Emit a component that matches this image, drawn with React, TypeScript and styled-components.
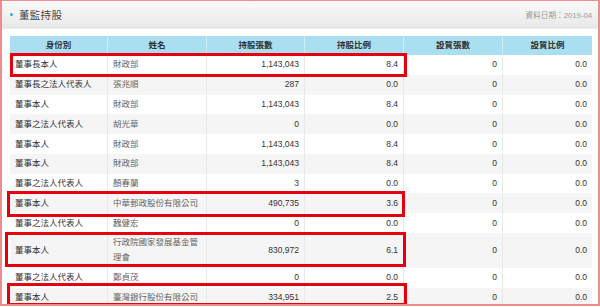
import styled, { createGlobalStyle } from "styled-components";

const GlobalStyle = createGlobalStyle`
  html, body {
    margin: 0;
    padding: 0;
    background: #fff;
  }
  body {
    font-family: "Liberation Sans", "Noto Sans CJK TC", sans-serif;
  }
`;

const Frame = styled.div`
  position: relative;
  width: 600px;
  height: 306px;
  box-sizing: border-box;
  border: 2px solid #ef8c8c;
  border-top-width: 1px;
  background: #fff;
  overflow: hidden;
`;

const TitleBar = styled.div`
  display: flex;
  justify-content: space-between;
  align-items: center;
  height: 26px;
  padding: 0 6px 0 8px;
  background: linear-gradient(#fafafa, #e9e9e9);
  box-shadow: 0 1px 2px rgba(0, 0, 0, 0.18);
`;

const Title = styled.h1`
  display: flex;
  align-items: center;
  gap: 6px;
  margin: 0;
  font-size: 10.5px;
  font-weight: normal;
  color: #444;
  letter-spacing: 0.3px;

  &::before {
    content: "";
    width: 3px;
    height: 3px;
    border-radius: 50%;
    background: #33a9dc;
  }
`;

const DateNote = styled.span`
  font-size: 7.7px;
  color: #9a9a9a;
`;

const TableWrap = styled.div`
  padding: 9px 0 0 8px;
`;

const Table = styled.table`
  border-collapse: separate;
  border-spacing: 0;
  table-layout: fixed;
  width: 582px;
  font-size: 8.5px;
  line-height: 15px;
  color: #333;
`;

const HeadCell = styled.th`
  padding: 2px 5px;
  background: #aadff1;
  border-right: 1px solid #cdeef9;
  font-weight: bold;
  text-align: center;
  color: #333;

  &:last-child {
    border-right: none;
  }
`;

const Row = styled.tr<{ $striped: boolean }>`
  background: ${(p) => (p.$striped ? "#f5f5f5" : "#fff")};
`;

const Cell = styled.td<{ $align?: "left" | "right"; $muted?: boolean }>`
  padding: 2.4px 5px;
  border-right: 1px solid #e8e8e8;
  text-align: ${(p) => p.$align ?? "left"};
  color: ${(p) => (p.$muted ? "#666" : "#333")};
  vertical-align: middle;

  &:last-child {
    border-right: none;
  }
`;

const Highlight = styled.div<{ $top: number; $left: number; $width: number; $height: number }>`
  position: absolute;
  top: ${(p) => p.$top}px;
  left: ${(p) => p.$left}px;
  width: ${(p) => p.$width}px;
  height: ${(p) => p.$height}px;
  box-sizing: border-box;
  border: 3px solid #e6000f;
  pointer-events: none;
`;

const columns = [
  { label: "身份別", width: 98 },
  { label: "姓名", width: 99 },
  { label: "持股張數", width: 98 },
  { label: "持股比例", width: 99 },
  { label: "設質張數", width: 99 },
  { label: "設質比例", width: 89 },
];

const rows = [
  ["董事長本人", "財政部", "1,143,043", "8.4", "0", "0.0"],
  ["董事長之法人代表人", "張兆順", "287", "0.0", "0", "0.0"],
  ["董事本人", "財政部", "1,143,043", "8.4", "0", "0.0"],
  ["董事之法人代表人", "胡光華", "0", "0.0", "0", "0.0"],
  ["董事本人", "財政部", "1,143,043", "8.4", "0", "0.0"],
  ["董事本人", "財政部", "1,143,043", "8.4", "0", "0.0"],
  ["董事之法人代表人", "顏春蘭", "3", "0.0", "0", "0.0"],
  ["董事本人", "中華郵政股份有限公司", "490,735", "3.6", "0", "0.0"],
  ["董事之法人代表人", "魏健宏", "0", "0.0", "0", "0.0"],
  ["董事本人", "行政院國家發展基金管理會", "830,972", "6.1", "0", "0.0"],
  ["董事之法人代表人", "鄭貞茂", "0", "0.0", "0", "0.0"],
  ["董事本人", "臺灣銀行股份有限公司", "334,951", "2.5", "0", "0.0"],
];

// hand-drawn annotation boxes, relative to the frame
const marks = [
  { top: 52, left: 8, width: 397, height: 24 },
  { top: 190, left: 5, width: 398, height: 26 },
  { top: 231, left: 3, width: 401, height: 35 },
  { top: 282, left: 5, width: 400, height: 23 },
];

export default function App() {
  return (
    <>
      <GlobalStyle />
      <Frame>
        <TitleBar>
          <Title>董監持股</Title>
          <DateNote>資料日期：2019-04</DateNote>
        </TitleBar>
        <TableWrap>
          <Table>
            <colgroup>
              {columns.map((c) => (
                <col key={c.label} style={{ width: c.width }} />
              ))}
            </colgroup>
            <thead>
              <tr>
                {columns.map((c) => (
                  <HeadCell key={c.label}>{c.label}</HeadCell>
                ))}
              </tr>
            </thead>
            <tbody>
              {rows.map((r, i) => (
                <Row key={i} $striped={i % 2 === 1}>
                  <Cell>{r[0]}</Cell>
                  <Cell $muted>{r[1]}</Cell>
                  <Cell $align="right">{r[2]}</Cell>
                  <Cell $align="right">{r[3]}</Cell>
                  <Cell $align="right">{r[4]}</Cell>
                  <Cell $align="right">{r[5]}</Cell>
                </Row>
              ))}
            </tbody>
          </Table>
        </TableWrap>
        {marks.map((m, i) => (
          <Highlight key={i} $top={m.top} $left={m.left} $width={m.width} $height={m.height} />
        ))}
      </Frame>
    </>
  );
}
